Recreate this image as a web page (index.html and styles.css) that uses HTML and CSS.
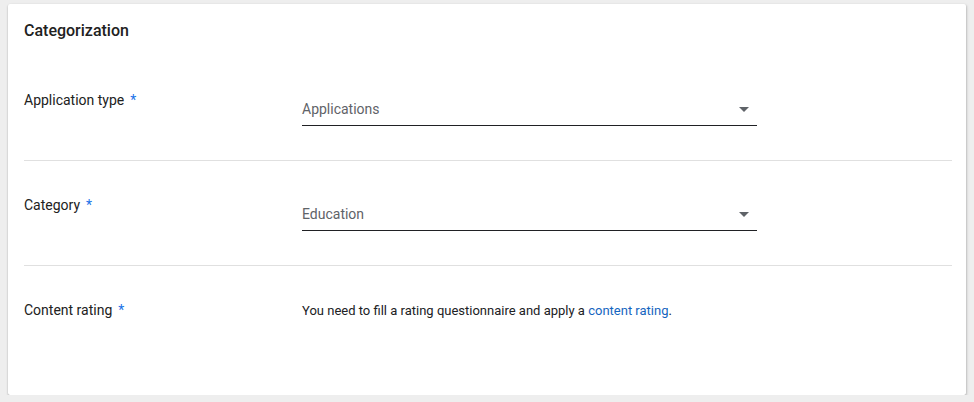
FILE: index.html
```html
<!DOCTYPE html>
<html>
<head>
<meta charset="utf-8">
<link rel="stylesheet" href="styles.css">
</head>
<body>
<div class="card">
  <h2 class="title">Categorization</h2>
  <div class="row">
    <div class="label">Application type<span class="req">*</span></div>
    <div class="field">
      <div class="select"><span class="value">Applications</span><span class="arrow"></span></div>
    </div>
  </div>
  <div class="row">
    <div class="label">Category<span class="req">*</span></div>
    <div class="field">
      <div class="select"><span class="value">Education</span><span class="arrow"></span></div>
    </div>
  </div>
  <div class="row last">
    <div class="label">Content rating<span class="req">*</span></div>
    <div class="field">
      <p class="note">You need to fill a rating questionnaire and apply a <a href="#" class="link">content rating</a>.</p>
    </div>
  </div>
</div>
</body>
</html>
```

FILE: styles.css
```css
html, body {
  margin: 0;
  background: #eeeeee;
}
body {
  padding: 4px 8px 0 8px;
  font-family: Roboto, "Liberation Sans", sans-serif;
  color: #202124;
}
.card {
  background: #ffffff;
  width: 958px;
  height: 391px;
  box-sizing: border-box;
  padding: 0 14px 0 16px;
  border-radius: 2px;
  box-shadow: 0 1px 2px rgba(0,0,0,0.28), 1px 1px 3px rgba(0,0,0,0.12);
}
.title {
  margin: 0;
  padding-top: 17px;
  height: 35px;
  font-size: 16px;
  font-weight: 500;
  line-height: 20px;
  color: #212121;
}
.row {
  display: flex;
  height: 105px;
  box-sizing: border-box;
  padding-top: 34px;
  border-bottom: 1px solid #e0e0e0;
}
.row.last {
  border-bottom: none;
}
.label {
  width: 278px;
  flex: none;
  font-size: 14px;
  line-height: 20px;
  color: #212121;
}
.req {
  color: #1a73e8;
  margin-left: 6px;
}
.field {
  width: 455px;
}
.select {
  display: flex;
  align-items: center;
  justify-content: space-between;
  padding: 9px 0 6px;
  border-bottom: 1px solid #202124;
}
.value {
  font-size: 14px;
  line-height: 20px;
  color: #5f6368;
}
.arrow {
  width: 0;
  height: 0;
  border-left: 5px solid transparent;
  border-right: 5px solid transparent;
  border-top: 5px solid #5f6368;
  margin-right: 8px;
}
.note {
  margin: 0;
  padding-top: 1px;
  font-size: 13px;
  line-height: 20px;
  color: #202124;
}
.link {
  color: #1565c0;
  text-decoration: none;
}
```
